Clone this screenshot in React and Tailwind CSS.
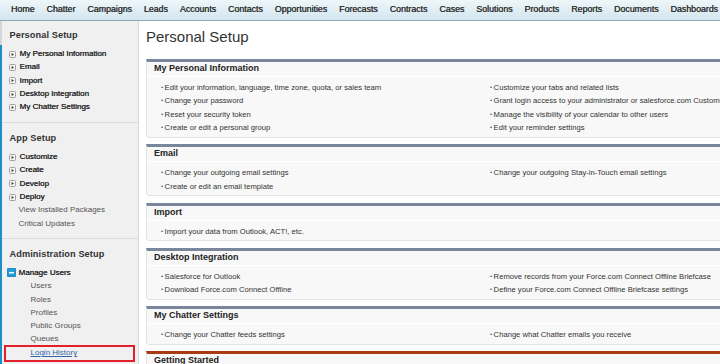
const tabs = ["Home","Chatter","Campaigns","Leads","Accounts","Contacts","Opportunities","Forecasts","Contracts","Cases","Solutions","Products","Reports","Documents","Dashboards"];

function Arrow() {
  return (
    <svg width="7" height="7" viewBox="0 0 7 7" className="shrink-0">
      <rect x="0.5" y="0.5" width="6" height="6" rx="1" fill="#f6f6f6" stroke="#a0a0a0" />
      <path d="M2.6 1.9 L4.9 3.5 L2.6 5.1 Z" fill="#333" />
    </svg>
  );
}

function Expanded() {
  return (
    <svg width="9" height="9" viewBox="0 0 9 9" className="shrink-0">
      <rect x="0" y="0" width="9" height="9" rx="1" fill="#1d8fca" />
      <rect x="1.5" y="1.5" width="6" height="6" fill="#2a9fd8" />
      <rect x="2" y="4" width="5" height="1.4" fill="#ffffff" />
    </svg>
  );
}

function SideItem({ children }) {
  return (
    <div className="flex items-center h-[13.3px] pl-[7px] gap-[4px] text-[8px] text-[#2b2b2b] [text-shadow:0.35px_0_0_currentColor] whitespace-nowrap">
      <Arrow />
      <span>{children}</span>
    </div>
  );
}

function PlainItem({ children, indent }) {
  return (
    <div className={(indent ? "pl-[29px] " : "pl-[17px] ") + "flex items-center h-[13.3px] text-[8px] text-[#555] whitespace-nowrap"}>
      {children}
    </div>
  );
}

function SideHead({ children }) {
  return (
    <div className="text-[9.2px] leading-[12px] font-bold text-[#333] pl-[8px] tracking-[0.1px] mb-[6.5px]">{children}</div>
  );
}

function Bullet({ children }) {
  return (
    <div className="flex items-center h-[13.5px] whitespace-nowrap">
      <span className="text-[6px] text-[#555] mr-[1.5px]">•</span>
      <span>{children}</span>
    </div>
  );
}

function Section({ title, left, right, top }) {
  return (
    <div className={"w-[650px] mb-[6.5px] border-x border-b border-x-[#e4e4e4] border-b-[#e4e4e4] border-t-[3px] rounded-b-[4px] bg-[#f8f8f8] " + top}>
      <div className="h-[15px] flex items-center pl-[7px] text-[9px] font-bold text-[#222] border-b border-white">{title}</div>
      {(left || right) && (
        <div className="pt-[4px] pb-[2px] pl-[14px] grid grid-cols-[329px_1fr] text-[7.65px] text-[#333]">
          <div>{(left || []).map((t) => <Bullet key={t}>{t}</Bullet>)}</div>
          <div>{(right || []).map((t) => <Bullet key={t}>{t}</Bullet>)}</div>
        </div>
      )}
    </div>
  );
}

export default function App() {
  return (
    <div className="w-[720px] h-[364px] overflow-hidden bg-white font-['Liberation_Sans',Arial,sans-serif] flex flex-col">
      <div className="h-[21px] shrink-0 flex items-center pl-[11px] gap-[12px] bg-gradient-to-b from-[#eef6fa] to-[#d3e6ef] border-b border-[#93a6b4] text-[8.8px] text-[#333] [text-shadow:0.35px_0_0_currentColor] whitespace-nowrap overflow-hidden">
        {tabs.map((t) => <span key={t}>{t}</span>)}
      </div>
      <div className="flex flex-1 min-h-0">
        <div className="w-[139px] shrink-0 flex bg-[#f0f0f0] border-r border-[#d8d8d8]">
          <div className="w-[1.5px] shrink-0 flex flex-col">
            <div className="h-[24px] bg-[#d6d6d6]" />
            <div className="flex-1 bg-[#1e8fc6]" />
          </div>
          <div className="flex-1 min-w-0">
            <div className="pt-[8px] pb-[8px] border-b border-[#dcdcdc]">
              <SideHead>Personal Setup</SideHead>
              <SideItem>My Personal Information</SideItem>
              <SideItem>Email</SideItem>
              <SideItem>Import</SideItem>
              <SideItem>Desktop Integration</SideItem>
              <SideItem>My Chatter Settings</SideItem>
            </div>
            <div className="pt-[9px] pb-[7.5px] border-b border-[#dcdcdc]">
              <SideHead>App Setup</SideHead>
              <SideItem>Customize</SideItem>
              <SideItem>Create</SideItem>
              <SideItem>Develop</SideItem>
              <SideItem>Deploy</SideItem>
              <PlainItem>View Installed Packages</PlainItem>
              <PlainItem>Critical Updates</PlainItem>
            </div>
            <div className="pt-[9px]">
              <SideHead>Administration Setup</SideHead>
              <div className="flex items-center h-[13.3px] pl-[5px] gap-[3px] text-[8px] text-[#2b2b2b] [text-shadow:0.35px_0_0_currentColor] whitespace-nowrap">
                <Expanded />
                <span>Manage Users</span>
              </div>
              <PlainItem indent>Users</PlainItem>
              <PlainItem indent>Roles</PlainItem>
              <PlainItem indent>Profiles</PlainItem>
              <PlainItem indent>Public Groups</PlainItem>
              <PlainItem indent>Queues</PlainItem>
              <div className="ml-[2.5px] mr-[3px] -mt-[1.5px] h-[17px] border-2 border-[#e2202b] flex items-center pl-[24.5px] text-[8px] text-[#3465a8] underline whitespace-nowrap">
                Login History
              </div>
            </div>
          </div>
        </div>
        <div className="flex-1 min-w-0 overflow-hidden pl-[7px]">
          <div className="pt-[7px] mb-[12.5px] text-[15px] leading-[18px] text-[#333]">Personal Setup</div>
          <Section
            title="My Personal Information"
            top="border-t-[#7a869c]"
            left={["Edit your information, language, time zone, quota, or sales team", "Change your password", "Reset your security token", "Create or edit a personal group"]}
            right={["Customize your tabs and related lists", "Grant login access to your administrator or salesforce.com Customer Support", "Manage the visibility of your calendar to other users", "Edit your reminder settings"]}
          />
          <Section
            title="Email"
            top="border-t-[#7a869c]"
            left={["Change your outgoing email settings", "Create or edit an email template"]}
            right={["Change your outgoing Stay-in-Touch email settings"]}
          />
          <Section
            title="Import"
            top="border-t-[#7a869c]"
            left={["Import your data from Outlook, ACT!, etc."]}
            right={[]}
          />
          <Section
            title="Desktop Integration"
            top="border-t-[#7a869c]"
            left={["Salesforce for Outlook", "Download Force.com Connect Offline"]}
            right={["Remove records from your Force.com Connect Offline Briefcase", "Define your Force.com Connect Offline Briefcase settings"]}
          />
          <Section
            title="My Chatter Settings"
            top="border-t-[#7a869c]"
            left={["Change your Chatter feeds settings"]}
            right={["Change what Chatter emails you receive"]}
          />
          <Section title="Getting Started" top="border-t-[#a83a14]" />
        </div>
      </div>
    </div>
  );
}
